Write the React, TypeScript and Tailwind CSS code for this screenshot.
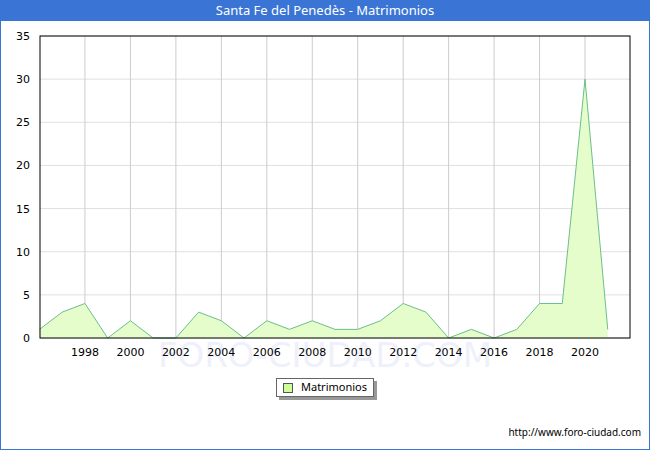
import React from "react";

const data = [1, 3, 4, 0, 2, 0, 0, 3, 2, 0, 2, 1, 2, 1, 1, 2, 4, 3, 0, 1, 0, 1, 4, 4, 30, 1];
const x0 = 39.5;
const stepX = 22.73;
const yBase = 337;
const perUnit = 302 / 35;

export default function App() {
  const pts = data.map((v, i) => `${x0 + i * stepX},${yBase - v * perUnit}`);
  const last = x0 + (data.length - 1) * stepX;
  const area = `${x0},${yBase} ${pts.join(" ")} ${last},${yBase}`;
  const years = [1998, 2000, 2002, 2004, 2006, 2008, 2010, 2012, 2014, 2016, 2018, 2020];
  const yTicks = [0, 5, 10, 15, 20, 25, 30, 35];
  return (
    <div className="w-[650px] h-[450px] bg-white border border-[#3a75d6] flex flex-col font-['DejaVu_Sans',sans-serif]">
      <div className="h-[20px] bg-[#3a75d6] text-white text-[13px] flex items-center justify-center">
        Santa Fe del Penedès - Matrimonios
      </div>
      <svg width="648" height="350" viewBox="1 20 648 350" className="block">
        <text x="325" y="366" textAnchor="middle" fontSize="34" fill="#eef0fb" fontFamily="DejaVu Sans">FORO-CIUDAD.COM</text>
        {yTicks.map((t) => (
          <g key={t}>
            <line x1={40} x2={630} y1={yBase - t * perUnit} y2={yBase - t * perUnit} stroke="#e0e0e0" />
            <text x="30" y={yBase - t * perUnit + 4} textAnchor="end" fontSize="11" fill="#000" fontFamily="DejaVu Sans">{t}</text>
          </g>
        ))}
        {years.map((y) => {
          const x = x0 + (y - 1996) * stepX;
          return (
            <g key={y}>
              <line x1={x} x2={x} y1={35} y2={yBase} stroke="#cccccc" />
              <text x={x} y={355} textAnchor="middle" fontSize="11" fill="#000" fontFamily="DejaVu Sans">{y}</text>
            </g>
          );
        })}
        <polygon points={area} fill="#e5fccb" />
        <polyline points={pts.join(" ")} fill="none" stroke="#6cbf8a" strokeWidth="1" />
        <rect x={40} y={35} width={590} height={302} fill="none" stroke="#000" />
      </svg>
      <div className="flex justify-center mt-[7px]">
        <div className="relative">
          <div className="absolute left-[3px] top-[3px] w-full h-full bg-[#999]" />
          <div className="relative flex items-center gap-[8px] border border-[#666] bg-white px-[6px] h-[19px] text-[11px] text-black">
            <span className="w-[10px] h-[10px] border border-[#555] bg-[#ccff99]" />
            Matrimonios
          </div>
        </div>
      </div>
      <div className="flex-1" />
      <div className="text-right pr-[8px] pb-[9px] text-[10px] text-black">http://www.foro-ciudad.com</div>
    </div>
  );
}
